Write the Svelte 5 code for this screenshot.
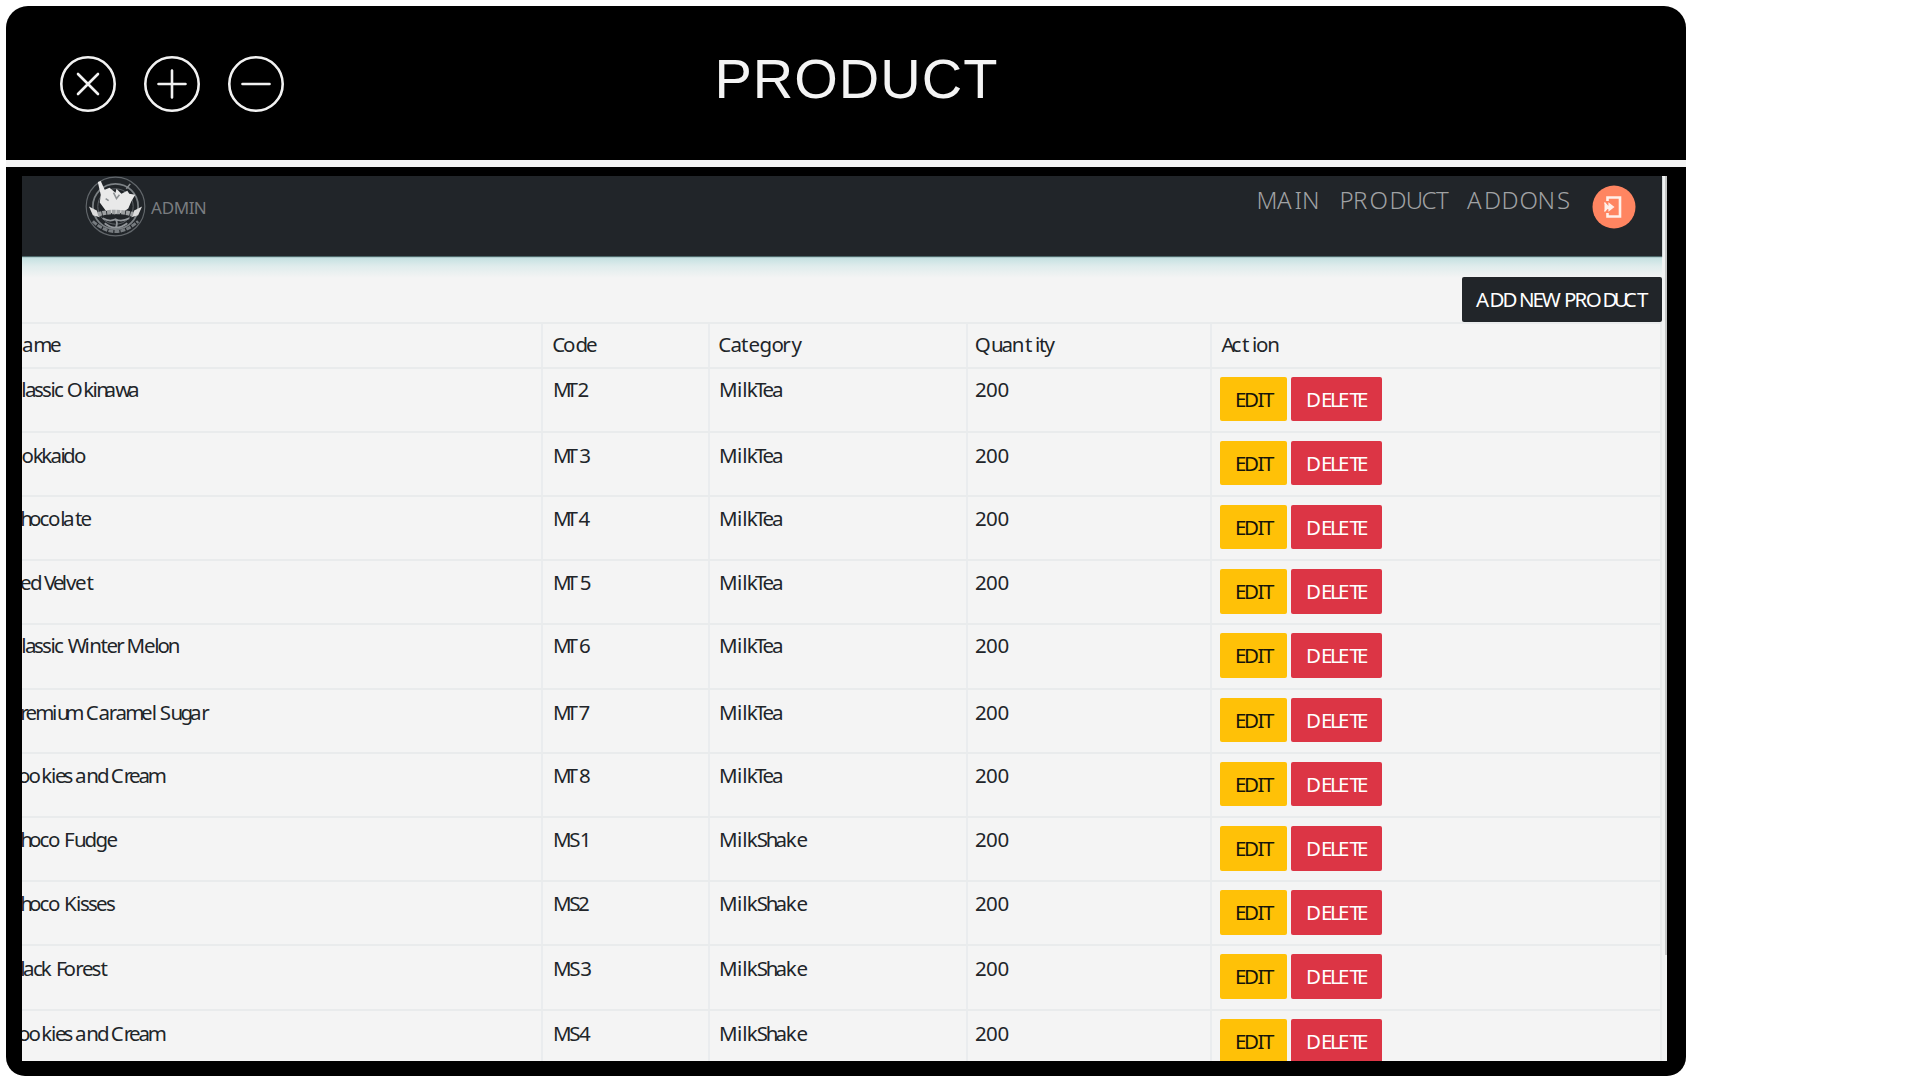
<script>
  // Left side bearing of each glyph, in em units, so labels can be laid out by ink edge.
  const bearing = {
    A: 0, C: 0.06, D: 0.1, E: 0.1, F: 0.1, I: 0.1, K: 0.1, L: 0.1, M: 0.1, N: 0.1, O: 0.06, P: 0.1, H: 0.1,
    Q: 0.06, R: 0.1, S: 0.04, T: 0.02, U: 0.09, V: 0, W: 0.01, B: 0.1,
    a: 0.045, b: 0.085, c: 0.055, d: 0.055, e: 0.055, g: 0.03, h: 0.085, i: 0.08, k: 0.085, l: 0.085, m: 0.085,
    n: 0.085, o: 0.055, r: 0.085, s: 0.045, t: 0.02, u: 0.08, v: 0, w: 0.01, y: 0,
    0: 0.05, 1: 0.09, 2: 0.045, 3: 0.04, 4: 0.02, 5: 0.06, 6: 0.055, 7: 0.045, 8: 0.05
  };

  function place(text, edges, origin, size) {
    let i = 0;
    let last = 0;
    return [...text]
      .map((ch) => {
        last = ch === ' ' ? last + size * 0.4 : edges[i++] - origin - (bearing[ch] ?? 0) * size;
        return last.toFixed(1);
      })
      .join(' ');
  }

  const columns = [22, 542, 709, 967, 1211];

  const head = [
    ['Name', [7, 23, 35, 51]],
    ['Code', [553, 563.5, 576, 586.5]],
    ['Category', [719, 731, 741, 749, 759.5, 772, 783.5, 791]],
    ['Quantity', [975.5, 992, 1002, 1013, 1025, 1036, 1039, 1044]],
    ['Action', [1221, 1232, 1242, 1253, 1256.5, 1268.5]]
  ];

  const tea = ['MilkTea', [720.5, 738, 743.5, 748, 755, 763, 772.5]];
  const shake = ['MilkShake', [720.5, 738, 743.5, 748, 757, 767, 776, 787, 797]];
  const quantity = ['200', [975.5, 986.5, 998]];
  const classic = [9, 23, 26, 35, 43, 52, 55];
  const choco = [8, 22, 30, 40.5, 49];
  const cookies = [8, 19, 29.5, 43, 52.5, 56, 64.5, 76, 88, 98, 112, 125.5, 130, 139.5, 149.5];

  const rows = [
    ['Classic Okinawa', [...classic, 68, 85, 94, 98, 105.5, 115.5, 129], 'MT2', 578, tea, 28.8],
    ['Hokkaido', [5, 22.5, 34.5, 43, 51.5, 62, 64, 75], 'MT3', 579.5, tea, 30.6],
    ['Chocolate', [...choco, 62, 64, 75.5, 81.5], 'MT4', 578.5, tea, 30.2],
    ['Red Velvet', [8, 21, 31, 44, 54, 63.5, 66, 76, 87], 'MT5', 580.5, tea, 29.5],
    ['Classic Winter Melon', [...classic, 68, 86, 91, 101, 107.5, 118, 128.5, 145, 156, 158.5, 169.5], 'MT6', 579.5, tea, 29.3],
    ['Premium Caramel Sugar', [9, 22, 26.5, 37, 53.5, 58.5, 67, 87, 99.5, 110.5, 116.5, 127, 142, 153.5, 160.5, 172, 181, 191, 203], 'MT7', 579, tea, 30.8],
    ['Cookies and Cream', cookies, 'MT8', 579.5, tea, 30.4],
    ['Choco Fudge', [...choco, 66, 75.5, 85.5, 96, 107.5], 'MS1', 581, shake, 29.8],
    ['Choco Kisses', [...choco, 66, 77.5, 81, 89, 97, 107], 'MS2', 578.5, shake, 29.8],
    ['Black Forest', [9, 22, 24, 34, 42.5, 58, 64.5, 77, 83, 92.5, 101], 'MS3', 580.5, shake, 31],
    ['Cookies and Cream', cookies, 'MS4', 579, shake, 30.5]
  ].map(([name, nameEdges, code, digit, category, base]) => ({
    base,
    cells: [[name, nameEdges], [code, [554.5, code[1] === 'T' ? 566.5 : 569.5, digit]], category, quantity]
  }));
</script>

{#snippet label(text, edges, origin, base, size = 20.5)}
  <svg class="label" aria-label={text}>
    <text x={place(text, edges, origin, size)} y={base} font-size={size}>{text}</text>
  </svg>
{/snippet}

<main class="window">
  <header class="titlebar">
    <div class="controls">
      <svg viewBox="0 0 56 56"><circle cx="28" cy="28" r="26.7" /><path d="M18 18 38 38M38 18 18 38" /></svg>
      <svg viewBox="0 0 56 56"><circle cx="28" cy="28" r="26.7" /><path d="M14.5 28h27M28 14.5v27" /></svg>
      <svg viewBox="0 0 56 56"><circle cx="28" cy="28" r="26.7" /><path d="M14.5 28h27" /></svg>
    </div>
    <h1>PRODUCT</h1>
  </header>

  <section class="frame">
    <div class="screen">
      <div class="page">
        <nav>
          <div class="brand">
            <svg class="logo" viewBox="0 0 62 62">
              <g fill="none" stroke="#62676b">
                <circle cx="31" cy="31" r="29.8" stroke-width="1.2" />
                <circle cx="31" cy="31" r="23" stroke="#7b8084" stroke-width="1.8" />
                <circle cx="31" cy="31" r="18" stroke-width="1" />
                <path d="M8 46Q31 67 54 46" stroke="#777c80" stroke-width="3" stroke-dasharray="5 1.2" />
              </g>
              <path d="M13 6l3-1 4 9 5-2 6 5 1-4 5 5 6-3 2 3 6 1-4 7-3 7-6 4-8 2-9-4-6-8 1-8z" fill="#e9e9e9" />
              <path d="M42 13l4-5M29 17l3 6 3-4M21 23l3 2" fill="none" stroke="#8b8f92" stroke-width="1.6" />
              <path d="M4 31l8 4 3 7-7-2zM58 31l-8 4-3 7 7-2z" fill="#dcdcdc" />
              <path d="M13 39Q31 34 49 39" fill="none" stroke="#9da0a2" stroke-width="4.5" stroke-dasharray="4 0.8" />
              <path d="M18 43q7 4 13 1 6 3 14-1M31 44q3 4 0 9M20 48q11 9 23 0" fill="none" stroke="#92969a" stroke-width="1.8" />
            </svg>
            {@render label('ADMIN', [151, 163.5, 175.5, 190.5, 195.5], 147, 38.3, 17)}
          </div>
          <div class="links">
            {@render label('MAIN', [1259, 1277, 1297, 1304.5], 1250, 33.3, 24)}
            {@render label('PRODUCT', [1342, 1355.5, 1371, 1392, 1408, 1423, 1436.5], 1335, 33.3, 24)}
            {@render label('ADDONS', [1467, 1486.5, 1504, 1521, 1540, 1558], 1460, 33.3, 24)}
          </div>
          <svg class="logout" viewBox="0 0 44 44">
            <circle cx="22" cy="22" r="21.5" fill="#ff8561" />
            <path d="M15.5 16v-3.5h12.5v19H15.5V28" />
            <path class="arrow" d="M12.5 17.5l4 4.5-4 4.5M17 18.5l4.5 3.5-4.5 3.5z" />
          </svg>
        </nav>

        <div class="toolbar">
          <div class="btn add">
            {@render label('ADD NEW PRODUCT', [1475.5, 1491, 1504, 1520.5, 1534, 1541.5, 1565.5, 1576, 1586.5, 1604, 1615, 1624.5, 1637], 1461.5, 29.8)}
          </div>
        </div>

        <div class="row head">
          {#each head as [text, edges], i}
            <div class="cell">{@render label(text, edges, columns[i] + (i ? 0.5 : 0), 28)}</div>
          {/each}
        </div>
        {#each rows as row}
          <div class="row">
            {#each row.cells as [text, edges], i}
              <div class="cell">{@render label(text, edges, columns[i] + (i ? 0.5 : 0), row.base - 1)}</div>
            {/each}
            <div class="cell actions">
              <div class="btn edit">{@render label('EDIT', [1237.5, 1246.5, 1260, 1264], 1220.5, 29.8)}</div>
              <div class="btn delete">{@render label('DELETE', [1308, 1323, 1332, 1340, 1350, 1359], 1291, 29.8)}</div>
            </div>
          </div>
        {/each}
      </div>
      <div class="scroll"><div class="thumb"></div></div>
    </div>
  </section>
</main>

<style>
  :global(body) {
    background: #fff;
    overflow: hidden;
  }
  * {
    box-sizing: border-box;
  }
  .window {
    width: 1680px;
    height: 1070px;
    margin: 6px 0 0 6px;
    border-radius: 22px 22px 19px 19px;
    overflow: hidden;
    background: #f4f4f4;
    display: flex;
    flex-direction: column;
    gap: 7px;
  }
  .titlebar {
    height: 154px;
    background: #000;
    display: grid;
    grid-template-columns: 708px 1fr;
  }
  .controls {
    display: flex;
    gap: 27.8px;
    padding: 50px 0 0 54px;
  }
  .controls svg {
    width: 56px;
    height: 56px;
    overflow: visible;
    fill: none;
    stroke: #f2f2f2;
    stroke-width: 2.6;
    stroke-linecap: round;
  }
  h1 {
    margin: 41px 0 0 0.5px;
    font: 400 56px/64px 'Liberation Sans', Arial, sans-serif;
    letter-spacing: 1px;
    color: #f4f4f4;
  }
  .frame {
    height: 909px;
    background: #000;
    padding: 9px 19px 0 16px;
  }
  .screen {
    height: 885px;
    overflow: hidden;
    background: #f4f4f4;
    display: flex;
  }
  .page {
    width: 1640px;
    flex: none;
  }
  nav {
    height: 80px;
    background: #212529;
    display: flex;
    box-shadow: 0 1px 1px #4c6668;
    position: relative;
  }
  .brand {
    display: flex;
    width: 1228px;
    padding-left: 63px;
  }
  .logo {
    width: 61px;
    height: 61px;
    margin-right: 1px;
    flex: none;
    filter: blur(0.7px);
  }
  .brand .label {
    fill: #7a7d80;
  }
  .links {
    display: grid;
    grid-template-columns: 85px 125px 117px;
    fill: #a0a2a4;
    font-weight: 300;
  }
  .logout {
    width: 44px;
    height: 44px;
    margin: 9px 0 0 15px;
  }
  .logout path {
    fill: none;
    stroke: #fff0ea;
    stroke-width: 2.6;
  }
  .logout .arrow {
    fill: #fff0ea;
    stroke-width: 1.2;
  }
  .toolbar {
    height: 65.5px;
    padding-top: 21px;
    display: flex;
    justify-content: flex-end;
    background: linear-gradient(#bfdedf, #dfecec 10px, #f4f4f4 22px);
  }
  .btn {
    height: 44.5px;
    border-radius: 2px;
  }
  .add {
    width: 200.5px;
    background: #212529;
    fill: #fff;
  }
  .row {
    height: 64.23px;
    display: grid;
    grid-template-columns: 520px 167px 258px 244px 1fr;
    border-top: 2px solid #e9ebec;
    border-right: 2px solid #e9ebec;
    fill: #212529;
  }
  .head {
    height: 45px;
  }
  .cell + .cell {
    border-left: 2px solid #eaecee;
    margin-left: -1px;
  }
  .actions {
    display: flex;
    gap: 4px;
    padding: 8px 0 0 8px;
  }
  .edit {
    width: 66.5px;
    background: #ffc107;
    fill: #16140a;
  }
  .delete {
    width: 91px;
    background: #dc3545;
    fill: #fff;
  }
  .label {
    display: block;
    width: 100%;
    height: 40px;
    overflow: visible;
    font-family: 'Noto Sans', 'Open Sans', sans-serif;
  }
  .scroll {
    width: 5px;
    background: #f0f2f2;
    display: flex;
    justify-content: flex-end;
  }
  .thumb {
    width: 2px;
    height: 779px;
    background: #c4c6c6;
  }
</style>
